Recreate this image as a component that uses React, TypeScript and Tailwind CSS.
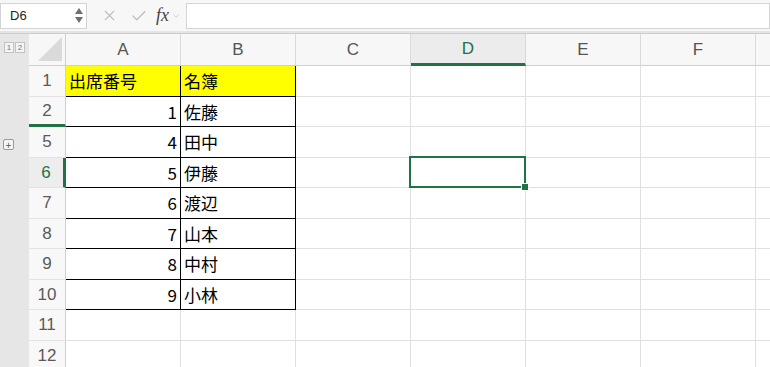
import { X, Check, ChevronDown } from 'lucide-react';

type Row = { n: string; a?: string; b?: string; head?: boolean; table?: boolean };

const ROWS: Row[] = [
  { n: '1', a: '出席番号', b: '名簿', head: true, table: true },
  { n: '2', a: '1', b: '佐藤', table: true },
  { n: '5', a: '4', b: '田中', table: true },
  { n: '6', a: '5', b: '伊藤', table: true },
  { n: '7', a: '6', b: '渡辺', table: true },
  { n: '8', a: '7', b: '山本', table: true },
  { n: '9', a: '8', b: '中村', table: true },
  { n: '10', a: '9', b: '小林', table: true },
  { n: '11' },
  { n: '12' },
];

const COLS = ['A', 'B', 'C', 'D', 'E', 'F'];

const FONT = { fontFamily: '"Noto Sans CJK JP", "Liberation Sans", sans-serif' };
const LATIN = { fontFamily: '"Liberation Sans", sans-serif' };

export default function App() {
  return (
    <div className="w-[770px] h-[367px] overflow-hidden bg-white flex flex-col" style={FONT}>
      {/* formula bar */}
      <div className="h-[31px] shrink-0 flex items-center bg-[#f7f7f7]">
        <div className="w-[87px] h-[26px] bg-white border border-[#d4d4d4] flex items-center justify-between pl-[9px] pr-[3px]">
          <span className="text-[13px] text-[#222]" style={LATIN}>D6</span>
          <div className="flex flex-col items-center gap-[3px]">
            <div className="w-0 h-0 border-x-[4px] border-x-transparent border-b-[6px] border-b-[#6f6f6f]" />
            <div className="w-0 h-0 border-x-[4px] border-x-transparent border-t-[6px] border-t-[#6f6f6f]" />
          </div>
        </div>
        <div className="flex items-center ml-[14px] gap-[12px] text-[#bdbdbd]">
          <X size={17} strokeWidth={1.6} />
          <Check size={18} strokeWidth={1.6} />
        </div>
        <span className="ml-[8px] text-[18px] italic text-[#444]" style={{ fontFamily: '"Liberation Serif", serif' }}>fx</span>
        <ChevronDown size={10} className="ml-[2px] text-[#c4c4c4]" />
        <div className="flex-1 ml-[5px] h-[26px] bg-white border border-[#d4d4d4]" />
      </div>
      <div className="h-[3px] shrink-0 bg-[#e4e4e4] border-b border-[#cdcdcd]" />

      <div className="flex flex-1 min-h-0">
        {/* outline gutter */}
        <div className="w-[29px] shrink-0 bg-[#e6e6e6] relative">
          <div className="flex gap-[1px] ml-[4px] mt-[8px]">
            {['1', '2'].map(l => (
              <div key={l} className="w-[10px] h-[11px] border border-[#c2c2c2] bg-[#f4f4f4] text-[8px] leading-[9px] text-[#777] text-center" style={LATIN}>{l}</div>
            ))}
          </div>
          <div className="absolute left-[3px] top-[105px] w-[11px] h-[11px] border border-[#999] rounded-[2px] bg-[#f4f4f4] flex items-center justify-center text-[10px] leading-none text-[#555]">+</div>
        </div>

        <div className="flex-1 flex flex-col">
          {/* column headers */}
          <div className="h-[32px] shrink-0 flex">
            <div className="w-[37px] shrink-0 bg-[#f7f7f7] border-r border-b border-[#cfcfcf] relative overflow-hidden">
              <div className="absolute right-[3px] bottom-[4px] w-0 h-0 border-l-[24px] border-l-transparent border-b-[24px] border-b-[#dadada]" />
            </div>
            {COLS.map(c => (
              <div
                key={c}
                className={`w-[115px] shrink-0 border-r flex items-center justify-center text-[17px] ${
                  c === 'D'
                    ? 'bg-[#ececec] border-b-[3px] border-b-[#217346] border-r-[#d8d8d8] text-[#217346]'
                    : 'bg-[#f7f7f7] border-b border-b-[#cfcfcf] border-r-[#dadada] text-[#555]'
                }`}
                style={LATIN}
              >
                {c}
              </div>
            ))}
            <div className="flex-1 bg-[#f7f7f7] border-b border-[#cfcfcf]" />
          </div>

          {ROWS.map(r => {
            const active = r.n === '6';
            return (
              <div key={r.n} className="h-[30.5px] shrink-0 flex">
                <div
                  className={`w-[37px] shrink-0 flex items-center justify-center text-[17px] border-r ${
                    active ? 'bg-[#ededed] text-[#217346] border-r-[3px] border-r-[#217346]' : 'bg-[#f8f8f8] text-[#5a5a5a] border-r-[#cfcfcf]'
                  } ${r.n === '2' ? 'border-b-[3px] border-b-[#217346]' : 'border-b border-b-[#e2e2e2]'}`}
                  style={LATIN}
                >
                  {r.n}
                </div>
                {COLS.map(c => {
                  const inTable = r.table && (c === 'A' || c === 'B');
                  const val = c === 'A' ? r.a : c === 'B' ? r.b : undefined;
                  const right = c === 'A' && !r.head;
                  return (
                    <div
                      key={c}
                      className={`w-[115px] shrink-0 border-r border-b flex items-center text-[17px] text-black relative ${
                        inTable ? 'border-black' : 'border-[#e0e0e0]'
                      } ${r.head && inTable ? 'bg-[#ffff00]' : ''} ${right ? 'justify-end pr-[3px]' : 'pl-[3px]'} ${active && c === 'D' ? 'z-10' : ''}`}
                    >
                      {val}
                      {active && c === 'D' && (
                        <div className="absolute -left-[2px] -top-[2px] -right-[1px] -bottom-[1px] border-2 border-[#217346]">
                          <div className="absolute -right-[5px] -bottom-[5px] w-[8px] h-[8px] bg-[#217346] border border-white" />
                        </div>
                      )}
                    </div>
                  );
                })}
                <div className="flex-1 border-b border-[#e0e0e0]" />
              </div>
            );
          })}
        </div>
      </div>
    </div>
  );
}
